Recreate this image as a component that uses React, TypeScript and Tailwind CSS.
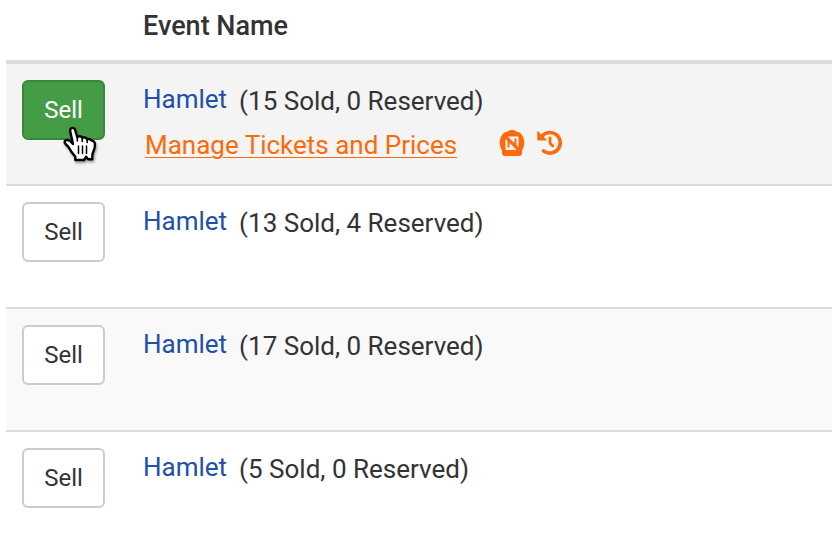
type EventRow = { id: number; sold: number; reserved: number; active?: boolean };

const events: EventRow[] = [
  { id: 1, sold: 15, reserved: 0, active: true },
  { id: 2, sold: 13, reserved: 4 },
  { id: 3, sold: 17, reserved: 0 },
  { id: 4, sold: 5, reserved: 0 },
];

function NoNumbersIcon() {
  return (
    <svg viewBox="0 0 26 28" className="h-7 w-[26px]" fill="none" aria-hidden="true">
      <path
        d="M8 3C9.500 1.500 11 1 13 1s3.500.5 5 2c2 0 3.500.6 4.300 2.200C24.300 7.500 25.300 10.500 25.300 13.500c0 3.300-1 5.800-2.300 7.800V24c0 2-1 3-3 3H6c-2 0-3-1-3-3v-2.700C1.700 19.300.7 16.800.7 13.500c0-3 1-6 3-8.300C4.500 3.600 6 3 8 3Z"
        fill="#fc6a0a"
      />
      <path d="M6.500 7.500h13v13.500h-13z" fill="#f4f4f4" />
      <path d="M9.500 10.500v8M16.500 9.500v8" stroke="#fc6a0a" strokeWidth="2" />
      <path d="m4.500 5.500 17 17" stroke="#fc6a0a" strokeWidth="3.200" />
    </svg>
  );
}

function HistoryIcon() {
  return (
    <svg viewBox="0 0 26 28" className="h-7 w-[26px]" fill="none" stroke="#fc6a0a" aria-hidden="true">
      <path d="M5.200 7A10.300 10.300 0 1 1 6.500 21.800" strokeWidth="3.600" strokeLinecap="round" />
      <path d="M.8 2.500v8.500h8.500z" fill="#fc6a0a" strokeWidth="1" strokeLinejoin="round" />
      <path d="M13 9v5.500l2.800 2.300" strokeWidth="2.800" strokeLinecap="round" strokeLinejoin="round" />
    </svg>
  );
}

function HandPointer() {
  return (
    <svg
      viewBox="0 0 34 36"
      className="pointer-events-none absolute top-[46px] left-[41px] h-9 w-[34px] drop-shadow-[1px_2px_1px_rgba(0,0,0,0.35)]"
      aria-hidden="true"
    >
      <path
        d="M12.300 34v-3.200c-1.600-2.200-3.800-4.300-5-6.800C6.200 21.500 4.500 19.700 2.600 18c-1.400-1.300-1.400-3 .2-3.700 2-.9 4.300.3 6 2.400l1.200 1.300L7.300 5.700C6.800 3.500 7.600 2.200 9 1.900c1.600-.3 2.800.7 3.300 2.600l1.900 6.500c1.700-1.300 4.300-.9 5 .8 1.700-.9 4.100-.4 4.800 1.400 1.600-.5 3.300-.2 4.200 1 .7.7 1.700.5 2.600 1.200 1.200 1 1.300 2.800 1.100 4.600-.2 3-1.400 5.200-2.200 7.300-.5 1.700-.4 3.500-.4 6h-4.200l-2-2.500-2 3.200Z"
        fill="#fff"
        stroke="#000"
        strokeWidth="2.400"
        strokeLinejoin="round"
      />
      <path d="M14.300 11v4M19.300 12v3.500M24.200 13.500v3" stroke="#000" strokeWidth="1.600" strokeLinecap="round" />
      <path d="M15.500 20v7.500M19.500 20v7.500M23.500 20v7.500" stroke="#000" strokeWidth="1.500" strokeLinecap="round" />
    </svg>
  );
}

function Row({ event }: { event: EventRow }) {
  const active = event.active;
  return (
    <tr className={active ? "bg-[#f4f4f4]" : "border-t-2 border-[#dcdcdc] bg-white nth-[3]:bg-[#f9f9f9]"}>
      <td className="h-[123px] p-4 align-top">
        <div className="relative">
          <button
            type="button"
            className={
              active
                ? "block h-15 w-full rounded-md border-2 border-[#3a863a] bg-[#449d44] text-2xl text-white"
                : "block h-15 w-full rounded-md border-2 border-[#cccccc] bg-white text-2xl text-[#333333]"
            }
          >
            Sell
          </button>
          {active && <HandPointer />}
        </div>
      </td>
      <td className="pt-[15px] pl-[22px] align-top whitespace-nowrap">
        <div className="flex h-11 items-start">
          <a href="#event" className="text-[#2050a8]">
            Hamlet
          </a>
          <span className="pt-0.5 pl-3">
            ({event.sold} Sold, {event.reserved} Reserved)
          </span>
        </div>
        {active && (
          <div className="flex h-11 items-center pl-0.5 text-[#fc6a0a]">
            <a href="#manage" className="underline decoration-1 underline-offset-3">
              Manage Tickets and Prices
            </a>
            <a href="#numbering" aria-label="Not numbered" className="mb-1 ml-[42px]">
              <NoNumbersIcon />
            </a>
            <a href="#history" aria-label="History" className="mb-1 ml-3">
              <HistoryIcon />
            </a>
          </div>
        )}
      </td>
    </tr>
  );
}

export default function App() {
  return (
    <main className="overflow-hidden bg-white pl-1.5 font-['Roboto',sans-serif] text-[26px] leading-10 text-[#333333]">
      <table className="w-full table-fixed border-collapse">
        <colgroup>
          <col className="w-[115px]" />
          <col />
        </colgroup>
        <thead>
          <tr className="h-[62px] border-b-4 border-[#dcdcdc]">
            <td />
            <th scope="col" className="pb-2 pl-[22px] text-left text-[27px] font-medium">
              Event Name
            </th>
          </tr>
        </thead>
        <tbody>
          {events.map((event) => (
            <Row key={event.id} event={event} />
          ))}
        </tbody>
      </table>
    </main>
  );
}
